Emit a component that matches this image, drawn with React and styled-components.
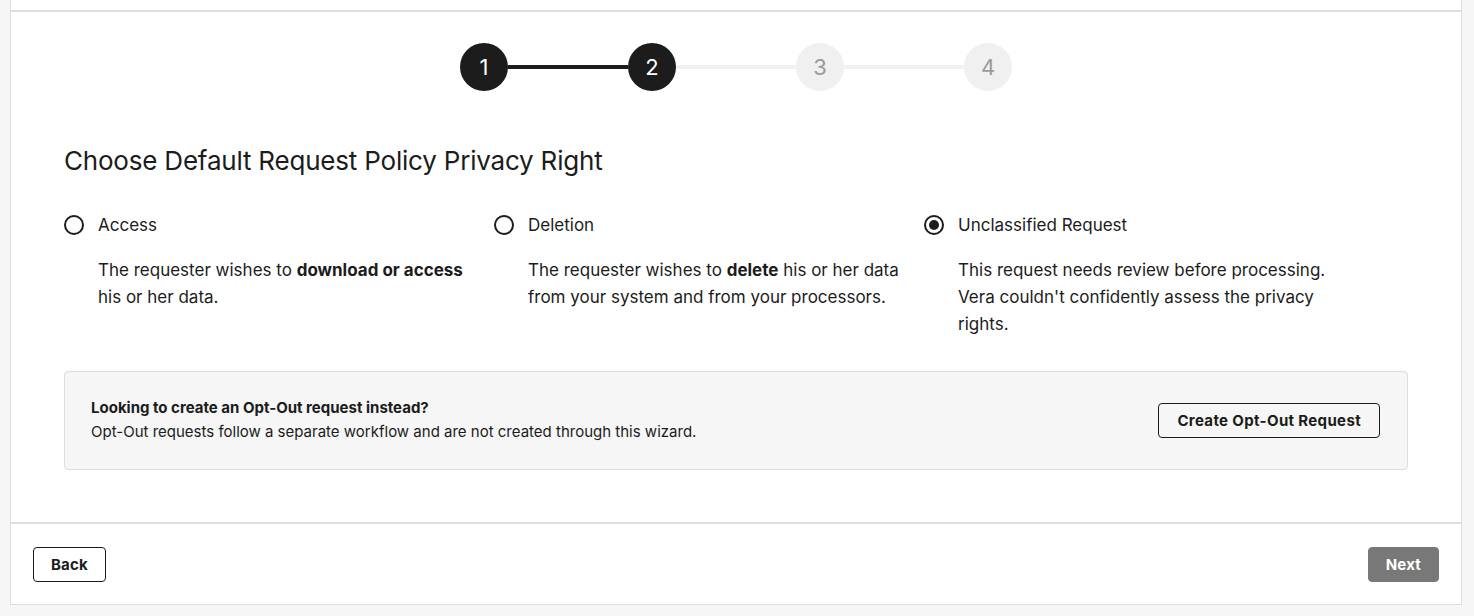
import React, { useState } from "react";
import styled, { createGlobalStyle } from "styled-components";

const GlobalStyle = createGlobalStyle`
  * { box-sizing: border-box; }
  body {
    margin: 0;
    background: #f5f6f5;
    font-family: Inter, "Noto Sans", sans-serif;
    color: #1b1c1b;
  }
`;

const Page = styled.div`
  padding: 0 12px 11px 10px;
`;

const Card = styled.div`
  background: #fff;
  border: 1px solid #dcdddc;
  border-top: none;
`;

const TopStrip = styled.div`
  height: 12px;
  border-bottom: 2px solid #dcdddc;
`;

const Body = styled.div`
  padding: 31px 53px 52px 53px;
  border-bottom: 2px solid #dcdddc;
`;

const Stepper = styled.div`
  display: flex;
  justify-content: center;
  align-items: center;
`;

const StepCircle = styled.div`
  width: 48px;
  height: 48px;
  border-radius: 50%;
  display: flex;
  align-items: center;
  justify-content: center;
  font-size: 22px;
  background: ${(p) => (p.$done ? "#1b1c1b" : "#eff0ef")};
  color: ${(p) => (p.$done ? "#fff" : "#9a9b9a")};
  flex-shrink: 0;
`;

const StepLine = styled.div`
  width: 120px;
  height: 4px;
  background: ${(p) => (p.$done ? "#1b1c1b" : "#eff0ef")};
`;

const Heading = styled.h2`
  margin: 54px 0 0;
  font-size: 26px;
  font-weight: 400;
  letter-spacing: -0.2px;
  line-height: 32px;
`;

const Options = styled.div`
  display: grid;
  grid-template-columns: repeat(3, 430px);
  margin-top: 36px;
`;

const Option = styled.label`
  display: flex;
  flex-direction: column;
  cursor: pointer;
`;

const OptionHead = styled.div`
  display: flex;
  align-items: center;
  gap: 14px;
  font-size: 17px;
  line-height: 24px;
`;

const Radio = styled.span`
  width: 20px;
  height: 20px;
  border-radius: 50%;
  border: 2px solid #1b1c1b;
  display: flex;
  align-items: center;
  justify-content: center;

  &::after {
    content: "";
    width: 10px;
    height: 10px;
    border-radius: 50%;
    background: ${(p) => (p.$checked ? "#1b1c1b" : "transparent")};
  }
`;

const OptionText = styled.p`
  margin: 20px 0 0 34px;
  max-width: 380px;
  font-size: 17px;
  line-height: 27px;

  b {
    font-weight: 700;
  }
`;

const InfoBox = styled.div`
  margin-top: 33px;
  background: #f5f6f5;
  border: 1px solid #dcdddc;
  border-radius: 4px;
  padding: 24px 27px 25px 26px;
  display: flex;
  align-items: center;
  justify-content: space-between;
`;

const InfoText = styled.div`
  font-size: 15px;
  line-height: 24px;

  strong {
    display: block;
    font-weight: 700;
  }
`;

const Button = styled.button`
  font-family: inherit;
  font-size: 15px;
  font-weight: 700;
  letter-spacing: ${(p) => (p.$wide ? "0.35px" : "0.2px")};
  border-radius: 4px;
  cursor: pointer;
  padding: 0 ${(p) => (p.$wide ? "18px" : "17px")};
  height: 35px;
  border: 1px solid ${(p) => (p.$filled ? "#777877" : "#1b1c1b")};
  background: ${(p) => (p.$filled ? "#777877" : "transparent")};
  color: ${(p) => (p.$filled ? "#fff" : "#1b1c1b")};
`;

const Footer = styled.div`
  display: flex;
  justify-content: space-between;
  align-items: center;
  padding: 23px 22px 22px 22px;
`;

const steps = [1, 2, 3, 4];

const options = [
  {
    id: "access",
    label: "Access",
    text: (
      <>
        The requester wishes to <b>download or access</b> his or her data.
      </>
    ),
  },
  {
    id: "deletion",
    label: "Deletion",
    text: (
      <>
        The requester wishes to <b>delete</b> his or her data from your system
        and from your processors.
      </>
    ),
  },
  {
    id: "unclassified",
    label: "Unclassified Request",
    text: (
      <>
        This request needs review before processing. Vera couldn't confidently
        assess the privacy rights.
      </>
    ),
  },
];

const App = () => {
  const [selected, setSelected] = useState("unclassified");
  const current = 2;

  return (
    <Page>
      <GlobalStyle />
      <Card>
        <TopStrip />
        <Body>
          <Stepper>
            {steps.map((n, i) => (
              <React.Fragment key={n}>
                {i > 0 && <StepLine $done={n <= current} />}
                <StepCircle $done={n <= current}>{n}</StepCircle>
              </React.Fragment>
            ))}
          </Stepper>

          <Heading>Choose Default Request Policy Privacy Right</Heading>

          <Options>
            {options.map((o) => (
              <Option key={o.id} onClick={() => setSelected(o.id)}>
                <OptionHead>
                  <Radio $checked={selected === o.id} />
                  {o.label}
                </OptionHead>
                <OptionText>{o.text}</OptionText>
              </Option>
            ))}
          </Options>

          <InfoBox>
            <InfoText>
              <strong>Looking to create an Opt-Out request instead?</strong>
              Opt-Out requests follow a separate workflow and are not created
              through this wizard.
            </InfoText>
            <Button $wide>Create Opt-Out Request</Button>
          </InfoBox>
        </Body>
        <Footer>
          <Button>Back</Button>
          <Button $filled>Next</Button>
        </Footer>
      </Card>
    </Page>
  );
};

export default App;
